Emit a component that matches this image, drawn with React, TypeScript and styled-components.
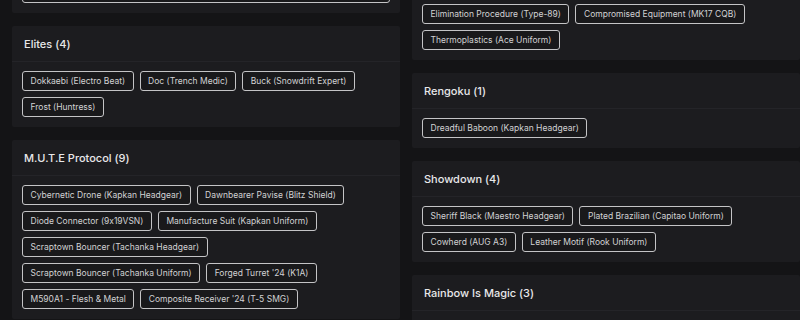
import styled, { createGlobalStyle } from "styled-components";

const GlobalStyle = createGlobalStyle`
  html, body {
    margin: 0;
    padding: 0;
    background: #141416;
  }
  * {
    box-sizing: border-box;
  }
`;

const Viewport = styled.div`
  width: 800px;
  height: 320px;
  overflow: hidden;
  background: #141416;
  font-family: Inter, "Open Sans", sans-serif;
  font-feature-settings: "calt" 0;
`;

// page is scrolled a little, so the columns start above the window
const Columns = styled.div`
  display: grid;
  grid-template-columns: 388px 388px;
  column-gap: 12px;
  align-items: start;
  padding-left: 12px;
  margin-top: -67px;
`;

const Column = styled.div`
  display: flex;
  flex-direction: column;
  gap: 13px;
`;

const Card = styled.section`
  background: #1c1c1f;
  border-radius: 2px;
`;

const CardHeader = styled.div`
  height: 36px;
  display: flex;
  align-items: center;
  padding: 0 12px;
  border-bottom: 1px solid #242428;
`;

const Title = styled.h3`
  margin: 0;
  font-size: 11px;
  font-weight: 500;
  color: #e8e8ea;
`;

const TagList = styled.div`
  display: flex;
  flex-wrap: wrap;
  gap: 6px;
  padding: 9px 10px 10px;
`;

const Tag = styled.span<{ $wide?: boolean }>`
  display: inline-flex;
  align-items: center;
  height: ${(p) => (p.$wide ? "25px" : "20px")};
  width: ${(p) => (p.$wide ? "100%" : "auto")};
  padding: 0 7.5px;
  border: 1.5px solid #c4c4c6;
  border-radius: 3px;
  background: #19191b;
  color: #d2d2d4;
  font-size: 8.5px;
  white-space: nowrap;
`;

type Group = { title: string; items: string[]; wide?: boolean };

const left: Group[] = [
  { title: "Collections (1)", items: ["Show all"], wide: true },
  {
    title: "Elites (4)",
    items: [
      "Dokkaebi (Electro Beat)",
      "Doc (Trench Medic)",
      "Buck (Snowdrift Expert)",
      "Frost (Huntress)",
    ],
  },
  {
    title: "M.U.T.E Protocol (9)",
    items: [
      "Cybernetic Drone (Kapkan Headgear)",
      "Dawnbearer Pavise (Blitz Shield)",
      "Diode Connector (9x19VSN)",
      "Manufacture Suit (Kapkan Uniform)",
      "Scraptown Bouncer (Tachanka Headgear)",
      "Scraptown Bouncer (Tachanka Uniform)",
      "Forged Turret '24 (K1A)",
      "M590A1 - Flesh & Metal",
      "Composite Receiver '24 (T-5 SMG)",
    ],
  },
];

const right: Group[] = [
  {
    title: "Hardline (5)",
    items: [
      "Rebel Surge (Ash Headgear)",
      "Synthetic Weave (Ash Uniform Set)",
      "Elimination Procedure (Type-89)",
      "Compromised Equipment (MK17 CQB)",
      "Thermoplastics (Ace Uniform)",
    ],
  },
  { title: "Rengoku (1)", items: ["Dreadful Baboon (Kapkan Headgear)"] },
  {
    title: "Showdown (4)",
    items: [
      "Sheriff Black (Maestro Headgear)",
      "Plated Brazilian (Capitao Uniform)",
      "Cowherd (AUG A3)",
      "Leather Motif (Rook Uniform)",
    ],
  },
  {
    title: "Rainbow Is Magic (3)",
    items: ["Rainbow Charm", "Unicorn Slippers", "Magic Wand"],
  },
];

function GroupCard({ group }: { group: Group }) {
  return (
    <Card>
      <CardHeader>
        <Title>{group.title}</Title>
      </CardHeader>
      <TagList>
        {group.items.map((item) => (
          <Tag key={item} $wide={group.wide}>
            {item}
          </Tag>
        ))}
      </TagList>
    </Card>
  );
}

export default function App() {
  return (
    <Viewport>
      <GlobalStyle />
      <Columns>
        <Column>
          {left.map((g) => (
            <GroupCard key={g.title} group={g} />
          ))}
        </Column>
        <Column>
          {right.map((g) => (
            <GroupCard key={g.title} group={g} />
          ))}
        </Column>
      </Columns>
    </Viewport>
  );
}
